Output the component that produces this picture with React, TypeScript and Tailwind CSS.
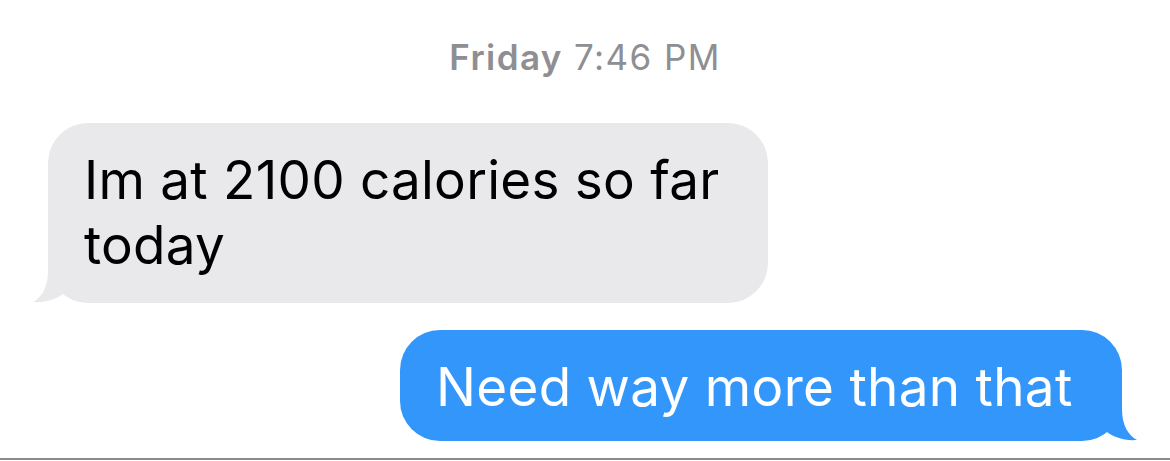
import React from 'react';

const font = { fontFamily: 'Inter, "Noto Sans", sans-serif' };

const ReceivedTail = () => (
  <svg
    className="absolute left-[-16px] bottom-0"
    width="80"
    height="60"
    viewBox="0 0 80 60"
  >
    <path
      d="M16 0 L16 28 C16 44 10 54 1 59 C14 60 26 56 35 48 C44 56 54 60 66 60 L80 60 L80 0 Z"
      fill="#e9e9eb"
    />
  </svg>
);

const SentTail = () => (
  <svg
    className="absolute right-[-16px] bottom-0"
    width="80"
    height="60"
    viewBox="0 0 80 60"
  >
    <path
      d="M64 0 L64 28 C64 44 70 54 79 59 C66 60 54 56 45 48 C36 56 26 60 14 60 L0 60 L0 0 Z"
      fill="#3396fa"
    />
  </svg>
);

export default function App() {
  return (
    <div className="w-[1170px] h-[461px] bg-white flex flex-col overflow-hidden" style={font}>
      <div className="pt-[37px] text-center text-[35px] leading-[40px] tracking-[1.4px] text-[#8e8e93]">
        <span className="font-semibold">Friday</span> 7:46 PM
      </div>

      <div className="pl-[48px] mt-[46px]">
        <div className="relative w-[720px] rounded-[40px] bg-[#e9e9eb] pl-[36px] pr-[30px] pt-[25px] pb-[25px] text-[53px] leading-[65px] tracking-[0.25px] text-black">
          <ReceivedTail />
          <span className="relative">Im at 2100 calories so far today</span>
        </div>
      </div>

      <div className="flex justify-end pr-[48px] mt-[27px]">
        <div className="relative w-[722px] rounded-[40px] bg-[#3396fa] pl-[36px] pr-[30px] pt-[25px] pb-[21px] text-[53px] leading-[65px] tracking-[0.3px] text-white whitespace-nowrap">
          <SentTail />
          <span className="relative">Need way more than that</span>
        </div>
      </div>

      <div className="flex-1" />
      <div className="h-[2px] bg-[#8a8a8a]" />
      <div className="h-px bg-white" />
    </div>
  );
}
